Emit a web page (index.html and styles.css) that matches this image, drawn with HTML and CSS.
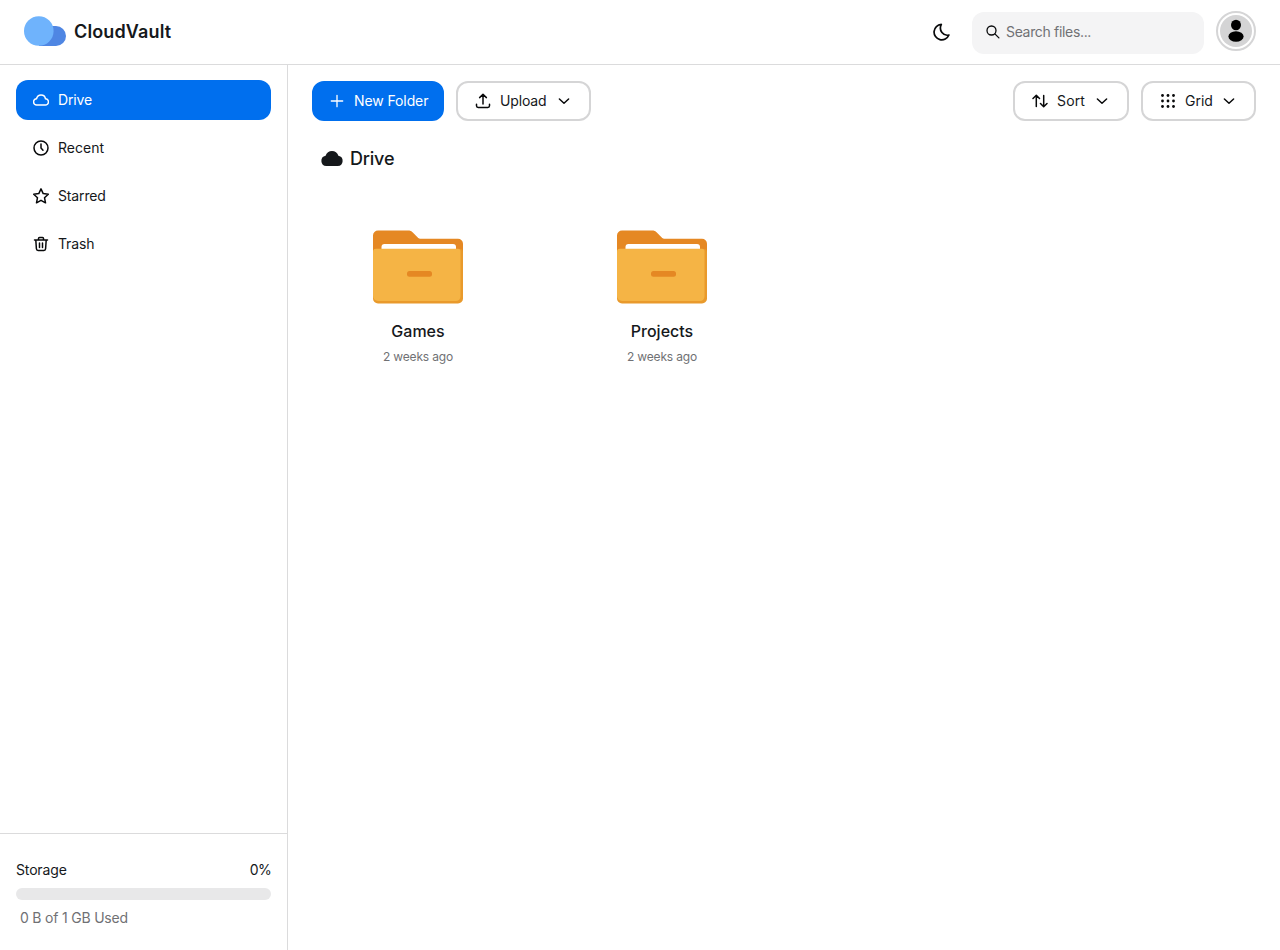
FILE: index.html
```html
<!DOCTYPE html>
<html lang="en">
<head>
<meta charset="utf-8">
<title>CloudVault</title>
<link rel="stylesheet" href="styles.css">
</head>
<body>
<svg class="defs" width="0" height="0" aria-hidden="true">
  <symbol id="chevron" viewBox="0 0 16 16"><path d="M3.400 6 8 10.200 12.600 6"/></symbol>
  <symbol id="folder" viewBox="0 0 90 74">
    <path fill="#e58823" d="M5 .5H35c2 0 3.500.6 4.800 2l4.700 4.700c1 1 2.200 1.600 3.700 1.600H85a5 5 0 0 1 5 5V40H0V5.500a5 5 0 0 1 5-5Z"/>
    <path fill="#fff" d="M8.500 25v-8a3 3 0 0 1 3-3H80a3 3 0 0 1 3 3v8Z"/>
    <path fill="#e99a2c" d="M3 19H87a3 3 0 0 1 3 3v46.500a5 5 0 0 1-5 5H5a5 5 0 0 1-5-5V22a3 3 0 0 1 3-3Z"/>
    <path fill="#f5b445" d="M3 18.700H85a2.500 2.500 0 0 1 2.500 2.500V66.500a4.500 4.500 0 0 1-4.500 4.500H5a5 5 0 0 1-5-5V21.700a3 3 0 0 1 3-3Z"/>
    <rect fill="#e58823" x="34" y="41" width="25" height="5.700" rx="2.500"/>
  </symbol>
</svg>
<header class="topbar">
  <div class="brand">
    <svg class="logo" viewBox="0 0 42 30"><path fill="#4f86e3" d="M15 10H32a10 10 0 0 1 0 20H15Z"/><circle cx="14.800" cy="15" r="14.800" fill="#6fb3fc"/></svg>
    <span class="brand-name">CloudVault</span>
  </div>
  <div class="tools">
    <svg class="icon moon" viewBox="0 0 18 18"><path d="M9.300 1.400A7.700 7.700 0 1 0 16.900 12C11.500 13.400 6.300 7.500 9.300 1.400Z"/></svg>
    <div class="search">
      <svg class="icon search-icon" viewBox="0 0 14 14"><circle cx="5.500" cy="5.500" r="4.500"/><path d="m8.900 8.900 4 4"/></svg>
      <span>Search files...</span>
    </div>
    <div class="avatar"><svg viewBox="0 0 32 32"><ellipse cx="16" cy="10" rx="5" ry="5.200"/><ellipse cx="16" cy="21.500" rx="7.600" ry="5.200"/></svg></div>
  </div>
</header>
<div class="shell">
  <aside class="sidebar">
    <nav class="nav">
      <a class="nav-item active"><svg class="icon" viewBox="0 0 16 16"><path d="M3.800 13A3.100 3.100 0 0 1 3.500 6.800C4.200 4.300 6 3 8 3c2.300 0 4.100 1.500 4.500 3.800A3.100 3.100 0 0 1 12.200 13Z"/></svg><span class="t-drive">Drive</span></a>
      <a class="nav-item"><svg class="icon" viewBox="0 0 16 16"><circle cx="8" cy="8" r="7"/><path d="M8 4v4l2 2.300"/></svg><span class="t-recent">Recent</span></a>
      <a class="nav-item"><svg class="icon" viewBox="0 0 16 16"><path d="m8 .9 2.200 4.700 5.100.6-3.800 3.500 1 5.100L8 12.300l-4.500 2.500 1-5.100L.7 6.200l5.100-.6Z"/></svg><span class="t-starred">Starred</span></a>
      <a class="nav-item"><svg class="icon" viewBox="0 0 16 16"><path d="M1.500 4h13M5.500 4V2.500q0-1 1-1h3q1 0 1 1V4M2.800 4l.6 8.800q.1 1.700 1.700 1.700h5.800q1.600 0 1.700-1.700L13.200 4M6.500 7v4.500M9.500 7v4.500"/></svg><span class="t-trash">Trash</span></a>
    </nav>
    <section class="storage">
      <div class="storage-head"><span class="t-storage">Storage</span><span class="t-percent">0%</span></div>
      <div class="bar"></div>
      <div class="used">0 B of 1 GB Used</div>
    </section>
  </aside>
  <main class="main">
    <div class="actions">
      <button class="btn primary"><svg class="icon plus" viewBox="0 0 16 16"><path d="M8 2.300v11.400M2.300 8h11.400"/></svg><span class="t-new">New Folder</span></button>
      <button class="btn upload"><svg class="icon" viewBox="0 0 16 16"><path d="M8 11V1.500M4.600 4.600 8 1.300l3.400 3.300M1.500 11.300v1.500q0 1.700 1.700 1.700h9.600q1.700 0 1.700-1.700v-1.500"/></svg><span class="t-upload">Upload</span><svg class="icon chevron"><use href="#chevron"/></svg></button>
      <button class="btn sort"><svg class="icon" viewBox="0 0 16 16"><path d="M4.300 13.500V2.700M1 5.500l3.300-3.200 3.200 3.200M11.700 2.500v10.800M8.500 10.500l3.200 3.200L15 10.500"/></svg><span class="t-sort">Sort</span><svg class="icon chevron"><use href="#chevron"/></svg></button>
      <button class="btn grid"><svg class="icon dots" viewBox="0 0 16 16"><circle cx="2.500" cy="2.500" r="1.400"/><circle cx="8" cy="2.500" r="1.400"/><circle cx="13.500" cy="2.500" r="1.400"/><circle cx="2.500" cy="8" r="1.400"/><circle cx="8" cy="8" r="1.400"/><circle cx="13.500" cy="8" r="1.400"/><circle cx="2.500" cy="13.500" r="1.400"/><circle cx="8" cy="13.500" r="1.400"/><circle cx="13.500" cy="13.500" r="1.400"/></svg><span class="t-grid">Grid</span><svg class="icon chevron"><use href="#chevron"/></svg></button>
    </div>
    <h1 class="crumb"><svg viewBox="0 0 22 15"><path d="M5.300 15A5.200 5.200 0 0 1 4.600 4.700C5.500 1.800 8 0 11 0s5.500 1.800 6.400 4.700A5.200 5.200 0 0 1 16.700 15Z"/></svg><span>Drive</span></h1>
    <div class="files">
      <article class="file"><svg class="folder"><use href="#folder"/></svg><h2 class="t-games">Games</h2><p>2 weeks ago</p></article>
      <article class="file"><svg class="folder"><use href="#folder"/></svg><h2 class="t-projects">Projects</h2><p>2 weeks ago</p></article>
    </div>
  </main>
</div>
</body>
</html>
```
FILE: styles.css
```css
* { box-sizing: border-box; }
body { margin: 0; height: 950px; overflow: hidden; display: flex; flex-direction: column; background: #fff; color: #15181b; font: 14px/20px Inter, "Liberation Sans", sans-serif; }
.defs { position: absolute; }
svg { display: block; flex: none; }
span, h2, p, .used { white-space: nowrap; }
.icon { width: 16px; height: 16px; fill: none; stroke: currentColor; stroke-width: 1.5; stroke-linecap: round; stroke-linejoin: round; color: #08090a; }
.topbar { height: 65px; flex: none; border-bottom: 1px solid #dbdbdc; display: flex; justify-content: space-between; padding: 0 24px; }
.brand { display: flex; align-items: center; gap: 8px; height: 63px; }
.logo { width: 42px; height: 30px; margin-bottom: 1px; }
.brand-name { font-size: 18px; line-height: 28px; font-weight: 600; letter-spacing: .13px; }
.tools { display: flex; align-items: flex-start; padding-top: 11px; }
.moon { width: 18px; height: 18px; margin: 12px 22px 0 0; stroke-width: 1.7; }
.search { width: 232px; height: 42px; margin: 1px 12px 0 0; border-radius: 12px; background: #f4f4f5; display: flex; align-items: center; padding: 0 14px 2px; gap: 6px; color: #707174; letter-spacing: -.33px; }
.search-icon { width: 14px; height: 14px; stroke-width: 1.3; }
.avatar { width: 40px; height: 40px; border: 2px solid #d5d5d6; border-radius: 50%; padding: 2px; }
.avatar svg { width: 32px; height: 32px; border-radius: 50%; background: #d4d4d5; }
.shell { display: flex; flex: 1; min-height: 0; }
.sidebar { width: 288px; border-right: 1px solid #dbdbdc; display: flex; flex-direction: column; justify-content: space-between; }
.nav { padding: 15px 16px; display: flex; flex-direction: column; gap: 8px; }
.nav-item { height: 40px; padding: 0 17px; border-radius: 12px; display: flex; align-items: center; gap: 9px; }
.active { background: #006fee; color: #fff; }
.active .icon { color: #fff; }
.t-drive, .t-starred, .t-trash, .t-storage, .t-upload { letter-spacing: -.15px; }
.t-new { letter-spacing: -.1px; }
.t-sort { letter-spacing: .15px; }
.t-percent { letter-spacing: -.7px; }
.storage { height: 117px; border-top: 1px solid #dbdbdc; padding: 26px 16px 0; }
.storage-head { display: flex; justify-content: space-between; }
.bar { height: 12px; margin-top: 8px; border-radius: 6px; background: #e8e8e9; }
.used { margin: 8px 0 0 4px; color: #707174; letter-spacing: -.2px; }
.main { flex: 1; padding: 16px 24px; }
.actions { display: flex; gap: 12px; }
.btn { height: 40px; border: 2px solid #d5d5d6; border-radius: 12px; background: #fff; color: #15181b; font: inherit; display: flex; align-items: center; padding: 0 17px; }
.btn span { margin-left: 9px; }
.primary { width: 132px; background: #006fee; border-color: #006fee; color: #fff; padding: 0 15px; }
.plus { color: #fff; stroke-width: 1.3; }
.upload { width: 135px; }
.sort { width: 116px; margin-left: auto; }
.grid { width: 115px; }
.btn .chevron { width: 16px; margin-left: auto; }
.dots { fill: currentColor; stroke: none; }
.crumb { display: flex; align-items: center; gap: 7px; margin: 24px 0 0 9px; font-size: 18px; line-height: 28px; font-weight: 500; letter-spacing: -.2px; }
.crumb svg { width: 22px; height: 15px; margin-bottom: 2px; fill: #15181b; }
.files { display: flex; gap: 32px; margin-top: 32px; }
.file { width: 212px; display: flex; flex-direction: column; align-items: center; padding-top: 25px; }
.folder { width: 90px; height: 74px; }
.file h2 { margin: 15px 0 0; font-size: 16px; line-height: 24px; font-weight: 500; }
.file p { margin: 6px 0 0; font-size: 12px; line-height: 16px; letter-spacing: -.15px; color: #707174; }
```
